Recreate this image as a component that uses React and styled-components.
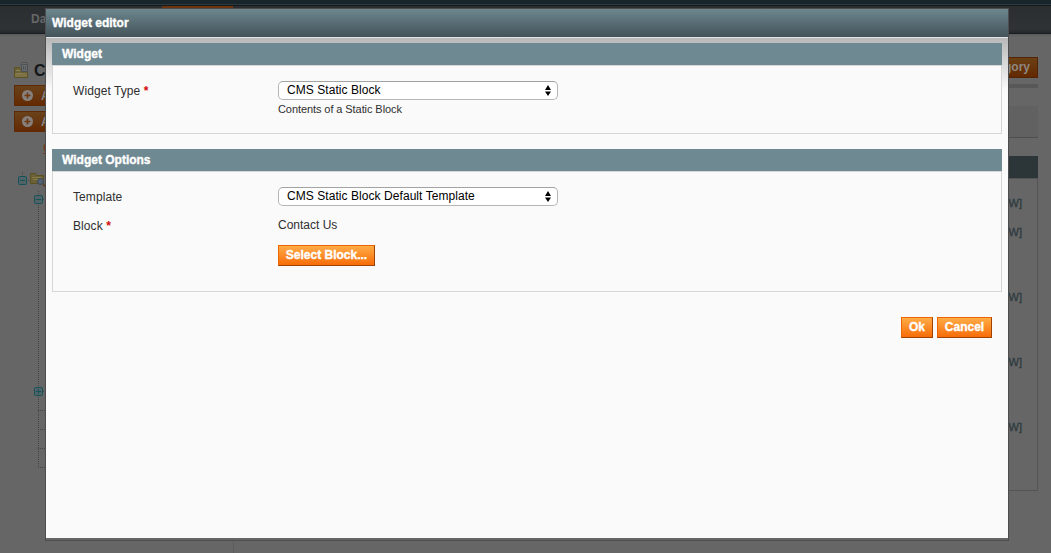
import React from "react";
import styled, { createGlobalStyle } from "styled-components";

const GlobalStyle = createGlobalStyle`
  *, *::before, *::after { box-sizing: border-box; }
  body {
    margin: 0;
    overflow: hidden;
    background: #666;
    color: #2f2f2f;
    font: 12px/16px "Liberation Sans", Arial, sans-serif;
  }
`;

const Page = styled.div`
  position: relative;
  height: 553px;
  overflow: hidden;
  white-space: nowrap;
  background: linear-gradient(#5a5a5a 34px, #666 37px);
`;
const TopStrip = styled.div`
  height: 6px;
  background: #18252b;
  border-bottom: 1px solid #17191a;
  box-shadow: inset 0 -1px #2b3a41;
`;
const Nav = styled.nav`
  display: flex;
  height: 28px;
  background: linear-gradient(#2b2e30, #2f3335 85%, #24282b);
  border-bottom: 1px solid #171d22;
`;
const NavItem = styled.span`
  width: ${(p) => p.$width}px;
  padding-left: ${(p) => p.$pad || 0}px;
  font-weight: bold;
  line-height: 26px;
  color: #656768;
  background: ${(p) => (p.$active ? "#6c3510" : "transparent")};
`;
const Columns = styled.div`
  display: flex;
  height: 519px;
`;
const Sidebar = styled.aside`
  width: 234px;
  padding: 28px 0 0 14px;
  border-right: 1px solid #5c5c5c;
`;
const Title = styled.h3`
  display: flex;
  align-items: center;
  gap: 4px;
  height: 18px;
  margin: 0 0 5px;
  font-size: 16px;
  color: #131719;
`;
const AddButton = styled.div`
  display: flex;
  align-items: center;
  gap: 7px;
  width: 150px;
  height: 21px;
  margin-bottom: 5px;
  padding-left: 6px;
  border: 1px solid #5e2905;
  background: linear-gradient(#69421b, #642a03);
  color: #858585;
  font-weight: bold;
`;
const Collapse = styled.div`
  height: 16px;
  margin: 8px 0 0 29px;
  color: #7b3510;
  text-decoration: underline;
`;
const Main = styled.main`
  flex: 1;
  display: flex;
  flex-direction: column;
  padding: 23px 13px 0 20px;
`;
const MainHead = styled.div`
  display: flex;
  justify-content: flex-end;
  height: 31px;
  border-bottom: 4px solid #585858;
`;
const SaveButton = styled.div`
  height: 21px;
  padding: 0 7px;
  border: 1px solid #542406;
  background: linear-gradient(#6b4015, #632800);
  color: #8e8782;
  font-weight: bold;
  line-height: 18px;
`;
const Tabs = styled.div`
  height: 32px;
  margin-top: 18px;
  background: #616161;
  border-bottom: 1px solid #4e4e4e;
`;
const PanelHead = styled.div`
  height: 22px;
  margin-top: 18px;
  background: #2c3638;
`;
const Panel = styled.div`
  display: flex;
  flex-direction: column;
  align-items: flex-end;
  height: 313px;
  padding: 16px 15px 0 0;
  border: 1px solid #545454;
`;
const Scope = styled.span`
  height: ${(p) => p.$height}px;
  color: #2d3a40;
  font-size: 11px;
  line-height: 16px;
  -webkit-text-stroke: 0.3px #2d3a40;
`;

const Dialog = styled.section`
  position: absolute;
  left: 45px;
  top: 8px;
  width: 964px;
  height: 533px;
  border: 1px solid #4d4d4d;
  border-bottom-color: #4f4f4f;
  background: #666;
`;
const DialogHead = styled.header`
  height: 29px;
  padding-left: 6px;
  border-bottom: 1px solid #e3e6e7;
  background: linear-gradient(#6d868e, #445359);
  color: #fff;
  font-weight: bold;
  line-height: 28px;
  -webkit-text-stroke: 0.35px #fff;
`;
const DialogBody = styled.div`
  height: 500px;
  padding: 5px 6px 0;
  background: linear-gradient(#b8b8b8, #fafafa 52px);
`;
const Fieldset = styled.div`
  margin-bottom: 15px;
`;
const Legend = styled.h4`
  height: 22px;
  margin: 0;
  padding-left: 10px;
  background: #6f8992;
  color: #fff;
  font-size: 12px;
  line-height: 22px;
  -webkit-text-stroke: 0.35px #fff;
`;
const Fields = styled.div`
  height: ${(p) => p.$height}px;
  padding: 15px 20px 0;
  border: 1px solid #d6d6d6;
  background: #fafafa;
`;
const Row = styled.div`
  display: flex;
  height: ${(p) => p.$height}px;
`;
const Label = styled.label`
  width: 205px;
  line-height: 20px;
  letter-spacing: 0.08px;
`;
const Required = styled.span`
  color: #d40707;
  font-weight: bold;
`;
const SelectBox = styled.div`
  display: flex;
  justify-content: space-between;
  align-items: center;
  width: 280px;
  height: 19px;
  padding: 0 6px 0 8px;
  border: 1px solid #b5b5b5;
  border-top-color: #a3a3a3;
  border-radius: 5px;
  background: #fff;
  color: #000;
  letter-spacing: 0.06px;
  line-height: 16px;
`;
const SelectText = styled.span`
  padding-bottom: 2px;
`;
const Note = styled.div`
  margin-top: 1px;
  font-size: 11px;
  letter-spacing: -0.08px;
`;
const Value = styled.div`
  height: 20px;
  margin-bottom: 9px;
  line-height: 18px;
`;
const Button = styled.button`
  width: ${(p) => p.$width}px;
  height: 21px;
  padding: 0 0 2px;
  border: 1px solid;
  border-color: #ed6502 #a04300 #a04300 #ed6502;
  background: linear-gradient(#ffac47, #f76c08);
  color: #fff;
  font: bold 12px/16px "Liberation Sans", Arial, sans-serif;
  -webkit-text-stroke: 0.35px #fff;
`;
const Actions = styled.div`
  display: flex;
  justify-content: flex-end;
  gap: 4px;
  margin-top: 25px;
  padding-right: 10px;
`;

const FolderIcon = () => (
  <svg width="16" height="18" viewBox="0 0 16 18">
    <path d="M.5 5.500h5l1 1h7v9H.5z" fill="#6b6138" stroke="#5c5122" />
    <path d="M1 11h12v4H1z" fill="#7d7347" />
    <path d="M2 8.500h4M3 11.500h5" stroke="#8b8256" />
    <path d="M7.500 9.500v-8q0-1 1-1h4q1 0 1 1v8z" fill="#686b6b" stroke="#4d5152" />
    <path d="M6.500 2.500h8M9.500 4v4M11.500 4v4" stroke="#505455" />
  </svg>
);

const PlusIcon = () => (
  <svg width="13" height="13" viewBox="0 0 13 13">
    <circle cx="6.500" cy="6.500" r="5.500" fill="#85807d" />
    <path d="M6.500 3.500v6M3.500 6.500h6" stroke="#6e3710" strokeWidth="1.600" />
  </svg>
);

const Toggle = ({ x, y, plus }) => (
  <g transform={`translate(${x} ${y})`} stroke="#175258" fill="none">
    <rect x=".5" y=".5" width="8" height="8" rx="1" fill="#506467" />
    <path d={plus ? "M2 4.500h5M4.500 2v5" : "M2 4.500h5"} />
  </g>
);

const Tree = styled.svg`
  display: block;
  margin-top: 12px;
`;

const CategoryTree = () => (
  <Tree width="60" height="310" viewBox="14 168 60 310">
    <g stroke="#454545" strokeDasharray="1 1" fill="none">
      <path d="M22.500 172v5M28 180.500h3M38.500 191v277" />
      <path d="M43 199.500h10M43 391.500h10M38 410.500h16M38 429.500h16M38 448.500h16M38 467.500h16" />
    </g>
    <Toggle x={18} y={176} />
    <Toggle x={34} y={195} />
    <Toggle x={34} y={387} plus />
    <path d="M30.500 183.500v-10h5l1 2h7v8z" fill="#6b6138" stroke="#5c5122" />
    <path d="M32 177.500h9M33 179.500h7" stroke="#887c40" />
    <circle cx="40.500" cy="181.500" r="3" fill="#536071" stroke="#3b4859" />
    <path d="M43 184l2 2.500" stroke="#5a3b1d" strokeWidth="1.500" />
  </Tree>
);

const Arrows = () => (
  <svg width="6" height="11" viewBox="0 0 6 11">
    <path d="M0 5L3 0l3 5zM0 6.500h6L3 11z" fill="#000" />
  </svg>
);

const Select = ({ children }) => (
  <SelectBox>
    <SelectText>{children}</SelectText>
    <Arrows />
  </SelectBox>
);

export default function App() {
  return (
    <>
      <GlobalStyle />
      <Page>
        <TopStrip />
        <Nav>
          <NavItem $width={162} $pad={31}>Da</NavItem>
          <NavItem $width={71} $active />
        </Nav>
        <Columns>
          <Sidebar>
            <Title><FolderIcon />C</Title>
            <AddButton><PlusIcon />A</AddButton>
            <AddButton><PlusIcon />A</AddButton>
            <Collapse>C</Collapse>
            <CategoryTree />
          </Sidebar>
          <Main>
            <MainHead><SaveButton>gory</SaveButton></MainHead>
            <Tabs />
            <PanelHead />
            <Panel>
              {[29, 65, 65, 65, 16].map((h, i) => (
                <Scope key={i} $height={h}>W]</Scope>
              ))}
            </Panel>
          </Main>
        </Columns>
        <Dialog>
          <DialogHead>Widget editor</DialogHead>
          <DialogBody>
            <Fieldset>
              <Legend>Widget</Legend>
              <Fields $height={69}>
                <Row>
                  <Label>Widget Type <Required>*</Required></Label>
                  <div>
                    <Select>CMS Static Block</Select>
                    <Note>Contents of a Static Block</Note>
                  </div>
                </Row>
              </Fields>
            </Fieldset>
            <Fieldset>
              <Legend>Widget Options</Legend>
              <Fields $height={121}>
                <Row $height={29}>
                  <Label>Template</Label>
                  <Select>CMS Static Block Default Template</Select>
                </Row>
                <Row>
                  <Label>Block <Required>*</Required></Label>
                  <div>
                    <Value>Contact Us</Value>
                    <Button $width={97}>Select Block...</Button>
                  </div>
                </Row>
              </Fields>
            </Fieldset>
            <Actions>
              <Button $width={32}>Ok</Button>
              <Button $width={55}>Cancel</Button>
            </Actions>
          </DialogBody>
        </Dialog>
      </Page>
    </>
  );
}
